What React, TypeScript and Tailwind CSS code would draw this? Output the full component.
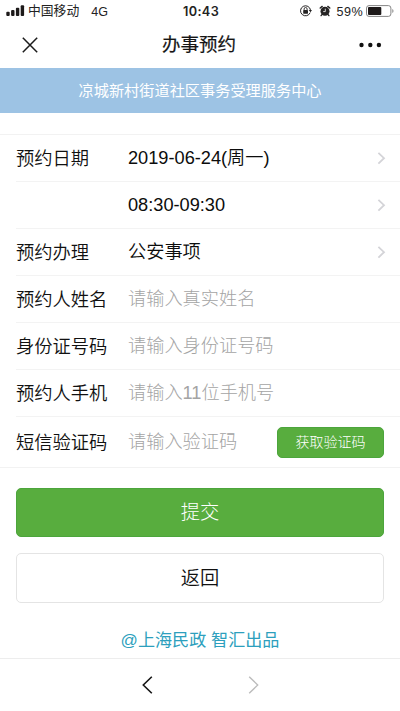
import React from 'react';

function StatusBar() {
  return (
    <div className="flex h-[22px] items-center pl-[6px] pr-[5px] text-[#222]">
      <div className="flex w-[177px] shrink-0 items-center">
        <svg width="19" height="12" viewBox="0 0 19 12" fill="#1d1a1a">
          <rect x="0.3" y="6.8" width="3.4" height="4.2" rx="1" />
          <rect x="5.1" y="5" width="3.4" height="6" rx="1" />
          <rect x="9.9" y="2.7" width="3.4" height="8.3" rx="1" />
          <rect x="14.7" y="0.2" width="3.4" height="10.8" rx="1" />
        </svg>
        <span className="ml-[3px] text-[12.8px] leading-[20px]">中国移动</span>
        <span className="ml-[12px] pt-px text-[12.5px] leading-[20px]">4G</span>
      </div>
      <span className="w-[100px] shrink-0 pt-px font-['Inter'] text-[12.7px] font-semibold leading-[20px] tracking-[0.35px]">10:43</span>
      <div className="ml-auto flex shrink-0 items-center">
        <svg width="12" height="12" viewBox="0 0 12 12" fill="none" stroke="#252323">
          <path d="M10.2 7.6A5 5 0 1 1 10.5 5.2" strokeWidth="1" />
          <path d="M8.7 5h3.3l-1.5 2.3z" fill="#252323" stroke="none" />
          <rect x="3.2" y="5" width="4.8" height="3.7" rx=".4" fill="#252323" stroke="none" />
          <path d="M4.1 5V4a1.5 1.5 0 0 1 3 0v1" strokeWidth=".9" />
        </svg>
        <svg className="ml-[7px]" width="12" height="12" viewBox="0 0 12 12">
          <circle cx="6" cy="6.3" r="4.5" fill="#252323" />
          <path d="M1.2 3 3.2 1.4M8.8 1.4l2 1.6M2.9 9.6l-.8 1M9.1 9.6l.8 1" stroke="#252323" strokeWidth="1.4" strokeLinecap="round" />
          <path d="M6.3 3.7v2.9H4.2" fill="none" stroke="#fff" strokeWidth=".8" />
        </svg>
        <span className="ml-[6px] pt-px text-[12.6px] leading-[20px] tracking-[0.4px]">59%</span>
        <svg className="ml-[3px]" width="29" height="12" viewBox="0 0 29 12">
          <rect x=".5" y=".6" width="24.4" height="10.8" rx="2.5" fill="none" stroke="#777" strokeWidth=".9" />
          <rect x="2" y="2" width="13.3" height="8" rx="1" fill="#1d1919" />
          <path d="M26.3 4v4c1.6-.6 1.6-3.4 0-4z" fill="#888" />
        </svg>
      </div>
    </div>
  );
}

function TitleBar() {
  return (
    <div className="flex h-[46px] items-center pl-[22px] pr-[18px]">
      <svg width="16" height="16" viewBox="0 0 16 16" fill="none" stroke="#1b1b1b" strokeWidth="1.5">
        <path d="M.8.8 15.2 15.2M15.2.8.8 15.2" />
      </svg>
      <h1 className="ml-[124px] text-[18.5px] font-normal leading-[26px] text-[#151515] [-webkit-text-stroke:0.2px_#151515]">办事预约</h1>
      <svg className="ml-auto" width="24" height="6" viewBox="0 0 24 6" fill="#111">
        <circle cx="3.5" cy="3" r="2.2" />
        <circle cx="12.3" cy="3" r="2.2" />
        <circle cx="20.9" cy="3" r="2.2" />
      </svg>
    </div>
  );
}

type RowProps = { label?: string; value?: string; placeholder?: string };

function Row({ label, value, placeholder }: RowProps) {
  return (
    <div className="ml-4 flex h-[47px] items-center border-b border-[#f3f3f3] pr-[14px]">
      <span className="w-28 shrink-0 pt-px text-[18.3px] font-[350] text-[#111]">{label}</span>
      {value ? (
        <span className="pt-[2px] text-[18.2px] font-[350] text-[#0c0c0c]">{value}</span>
      ) : (
        <span className="pt-[2px] text-[18.2px] font-light text-[#a4a4a4]">{placeholder}</span>
      )}
      {value && (
        <svg className="ml-auto" width="9" height="13" viewBox="0 0 9 13" fill="none" stroke="#d4d4d8" strokeWidth="1.8">
          <path d="m1.4 .8 5.6 5.4-5.6 5.4" />
        </svg>
      )}
    </div>
  );
}

export default function App() {
  return (
    <div className="flex h-[711px] w-[400px] flex-col overflow-hidden bg-white font-['Liberation_Sans','Noto_Sans_CJK_SC',sans-serif]">
      <StatusBar />
      <TitleBar />
      <div className="flex h-[45px] shrink-0 items-center justify-center bg-[#9dc3e4] pt-px text-[15.2px] text-white">
        凉城新村街道社区事务受理服务中心
      </div>
      <main className="flex flex-col">
        <section className="mt-[21px] border-y border-[#f2f2f2]">
          <Row label="预约日期" value="2019-06-24(周一)" />
          <Row value="08:30-09:30" />
          <Row label="预约办理" value="公安事项" />
          <Row label="预约人姓名" placeholder="请输入真实姓名" />
          <Row label="身份证号码" placeholder="请输入身份证号码" />
          <Row label="预约人手机" placeholder="请输入11位手机号" />
          <div className="flex h-[50px] items-center px-4">
            <span className="w-28 shrink-0 pt-px text-[18.3px] font-[350] text-[#111]">短信验证码</span>
            <span className="pt-[2px] text-[18.2px] font-light text-[#a4a4a4]">请输入验证码</span>
            <button className="ml-auto h-[31px] w-[107px] rounded-[5px] border border-[#4ca53c] bg-[#58ad3e] text-[14px] font-light text-white">获取验证码</button>
          </div>
        </section>
        <div className="mt-5 flex flex-col gap-4 px-4">
          <button className="h-[49px] rounded-[5px] border border-[#4ca53c] bg-[#58ad3e] pt-[2px] text-[19.3px] font-light text-white">提交</button>
          <button className="h-[50px] rounded-[5px] border border-[#e4e4e4] bg-white pt-[2px] text-[19.3px] font-[350] text-[#111]">返回</button>
        </div>
        <p className="mt-[25px] text-center text-[17.1px] leading-[26px] text-[#2d9fbd]">@上海民政 智汇出品</p>
      </main>
      <nav className="mt-auto flex h-[53px] shrink-0 items-center justify-center gap-[95px] border-t border-[#ededed]">
        <svg width="11" height="18" viewBox="0 0 11 18" fill="none" stroke="#151515" strokeWidth="1.6">
          <path d="M9.8.7 1.3 9l8.5 8.3" />
        </svg>
        <svg width="11" height="18" viewBox="0 0 11 18" fill="none" stroke="#bcbcbc" strokeWidth="1.4">
          <path d="M1.2.7 9.7 9l-8.5 8.3" />
        </svg>
      </nav>
    </div>
  );
}
